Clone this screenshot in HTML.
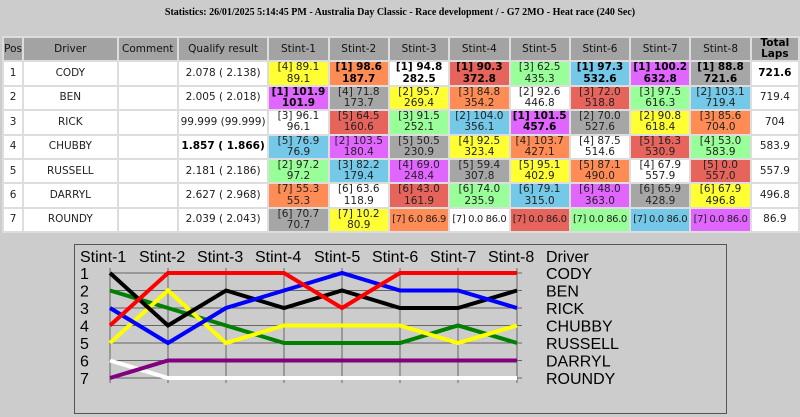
<!DOCTYPE html>
<html><head><meta charset="utf-8"><style>
body{margin:0;width:800px;height:417px;background:#cccccc;overflow:hidden;position:relative;font-family:"DejaVu Sans","Liberation Sans",sans-serif;}
.title{position:absolute;top:7px;left:0;width:800px;text-align:center;font:bold 10px "Liberation Serif",serif;color:#000;}
table{position:absolute;left:2px;top:36px;border-collapse:separate;border-spacing:2px;background:#dddddd;table-layout:fixed;width:798px;}
td,th{padding:0;text-align:center;font-size:10.5px;line-height:11.2px;color:#222;height:22.4px;overflow:hidden;white-space:nowrap;}
th{background:#a3a3a3;font-weight:normal;color:#111;height:22.4px;}
th.t{font-weight:bold;color:#000;}
td{background:#fff;}
td.s{font-size:10px;letter-spacing:-0.4px;}
.b{font-weight:bold;color:#000;}
.y{background:#ffff33}.o{background:#ff8c55}.r{background:#e6645c}.g{background:#99ff99}.c{background:#74c8e8}.p{background:#e066ff}.k{background:#a6a6a6}.w{background:#fff}
.chart{position:absolute;left:74px;top:244px;width:651px;height:168px;border:1px solid #555;}
</style></head><body>
<div class="title">Statistics: 26/01/2025 5:14:45 PM - Australia Day Classic - Race development / - G7 2MO - Heat race (240 Sec)</div>
<table>
<colgroup><col style="width:18px"><col style="width:92px"><col style="width:58px"><col style="width:88px"><col style="width:58px"><col style="width:58px"><col style="width:58px"><col style="width:58px"><col style="width:58px"><col style="width:58px"><col style="width:58px"><col style="width:58px"><col style="width:46px"></colgroup>
<tr><th>Pos</th><th>Driver</th><th>Comment</th><th>Qualify result</th><th>Stint-1</th><th>Stint-2</th><th>Stint-3</th><th>Stint-4</th><th>Stint-5</th><th>Stint-6</th><th>Stint-7</th><th>Stint-8</th><th class="t">Total<br>Laps</th></tr>
<tr><td>1</td><td>CODY</td><td></td><td>2.078 ( 2.138)</td><td class="y">[4] 89.1<br>89.1</td><td class="o b">[1] 98.6<br>187.7</td><td class="w b">[1] 94.8<br>282.5</td><td class="r b">[1] 90.3<br>372.8</td><td class="g">[3] 62.5<br>435.3</td><td class="c b">[1] 97.3<br>532.6</td><td class="p b">[1] 100.2<br>632.8</td><td class="k b">[1] 88.8<br>721.6</td><td class="b">721.6</td></tr>
<tr><td>2</td><td>BEN</td><td></td><td>2.005 ( 2.018)</td><td class="p b">[1] 101.9<br>101.9</td><td class="k">[4] 71.8<br>173.7</td><td class="y">[2] 95.7<br>269.4</td><td class="o">[3] 84.8<br>354.2</td><td class="w">[2] 92.6<br>446.8</td><td class="r">[3] 72.0<br>518.8</td><td class="g">[3] 97.5<br>616.3</td><td class="c">[2] 103.1<br>719.4</td><td>719.4</td></tr>
<tr><td>3</td><td>RICK</td><td></td><td>99.999 (99.999)</td><td class="w">[3] 96.1<br>96.1</td><td class="r">[5] 64.5<br>160.6</td><td class="g">[3] 91.5<br>252.1</td><td class="c">[2] 104.0<br>356.1</td><td class="p b">[1] 101.5<br>457.6</td><td class="k">[2] 70.0<br>527.6</td><td class="y">[2] 90.8<br>618.4</td><td class="o">[3] 85.6<br>704.0</td><td>704</td></tr>
<tr><td>4</td><td>CHUBBY</td><td></td><td class="b">1.857 ( 1.866)</td><td class="c">[5] 76.9<br>76.9</td><td class="p">[2] 103.5<br>180.4</td><td class="k">[5] 50.5<br>230.9</td><td class="y">[4] 92.5<br>323.4</td><td class="o">[4] 103.7<br>427.1</td><td class="w">[4] 87.5<br>514.6</td><td class="r">[5] 16.3<br>530.9</td><td class="g">[4] 53.0<br>583.9</td><td>583.9</td></tr>
<tr><td>5</td><td>RUSSELL</td><td></td><td>2.181 ( 2.186)</td><td class="g">[2] 97.2<br>97.2</td><td class="c">[3] 82.2<br>179.4</td><td class="p">[4] 69.0<br>248.4</td><td class="k">[5] 59.4<br>307.8</td><td class="y">[5] 95.1<br>402.9</td><td class="o">[5] 87.1<br>490.0</td><td class="w">[4] 67.9<br>557.9</td><td class="r">[5] 0.0<br>557.0</td><td>557.9</td></tr>
<tr><td>6</td><td>DARRYL</td><td></td><td>2.627 ( 2.968)</td><td class="o">[7] 55.3<br>55.3</td><td class="w">[6] 63.6<br>118.9</td><td class="r">[6] 43.0<br>161.9</td><td class="g">[6] 74.0<br>235.9</td><td class="c">[6] 79.1<br>315.0</td><td class="p">[6] 48.0<br>363.0</td><td class="k">[6] 65.9<br>428.9</td><td class="y">[6] 67.9<br>496.8</td><td>496.8</td></tr>
<tr><td>7</td><td>ROUNDY</td><td></td><td>2.039 ( 2.043)</td><td class="k">[6] 70.7<br>70.7</td><td class="y">[7] 10.2<br>80.9</td><td class="o s">[7] 6.0 86.9</td><td class="w s">[7] 0.0 86.0</td><td class="r s">[7] 0.0 86.0</td><td class="g s">[7] 0.0 86.0</td><td class="c s">[7] 0.0 86.0</td><td class="p s">[7] 0.0 86.0</td><td>86.9</td></tr>
</table>
<div class="chart"></div>
<svg style="position:absolute;left:0;top:0" width="800" height="417" font-family="Liberation Sans, sans-serif" font-size="16">
<g stroke="#666" stroke-width="1">
<line x1="110" y1="273" x2="517" y2="273"/><line x1="110" y1="290.5" x2="517" y2="290.5"/><line x1="110" y1="308" x2="517" y2="308"/><line x1="110" y1="325.5" x2="517" y2="325.5"/><line x1="110" y1="343" x2="517" y2="343"/><line x1="110" y1="360.5" x2="517" y2="360.5"/><line x1="110" y1="378" x2="517" y2="378"/>
<line x1="110" y1="268" x2="110" y2="383"/><line x1="168" y1="268" x2="168" y2="383"/><line x1="226" y1="268" x2="226" y2="383"/><line x1="284" y1="268" x2="284" y2="383"/><line x1="342" y1="268" x2="342" y2="383"/><line x1="400" y1="268" x2="400" y2="383"/><line x1="458" y1="268" x2="458" y2="383"/><line x1="517" y1="268" x2="517" y2="383"/>
<line x1="517" y1="273" x2="522" y2="273"/><line x1="517" y1="290.5" x2="522" y2="290.5"/><line x1="517" y1="308" x2="522" y2="308"/><line x1="517" y1="325.5" x2="522" y2="325.5"/><line x1="517" y1="343" x2="522" y2="343"/><line x1="517" y1="360.5" x2="522" y2="360.5"/><line x1="517" y1="378" x2="522" y2="378"/>
</g>
<g fill="none" stroke-width="4" stroke-linejoin="miter">
<polyline stroke="#fff" points="110,360.5 168,378 226,378 284,378 342,378 400,378 458,378 517,378"/>
<polyline stroke="#800080" points="110,378 168,360.5 226,360.5 284,360.5 342,360.5 400,360.5 458,360.5 517,360.5"/>
<polyline stroke="#008000" points="110,290.5 168,308 226,325.5 284,343 342,343 400,343 458,325.5 517,343"/>
<polyline stroke="#ffff00" points="110,343 168,290.5 226,343 284,325.5 342,325.5 400,325.5 458,343 517,325.5"/>
<polyline stroke="#000" points="110,273 168,325.5 226,290.5 284,308 342,290.5 400,308 458,308 517,290.5"/>
<polyline stroke="#0000ff" points="110,308 168,343 226,308 284,290.5 342,273 400,290.5 458,290.5 517,308"/>
<polyline stroke="#ff0000" points="110,325.5 168,273 226,273 284,273 342,308 400,273 458,273 517,273"/>
</g>
<g fill="#000">
<text x="80" y="262">Stint-1</text><text x="139" y="262">Stint-2</text><text x="197" y="262">Stint-3</text><text x="255" y="262">Stint-4</text><text x="314" y="262">Stint-5</text><text x="372" y="262">Stint-6</text><text x="430" y="262">Stint-7</text><text x="488" y="262">Stint-8</text><text x="546" y="262">Driver</text>
<text x="80" y="279">1</text><text x="80" y="296.5">2</text><text x="80" y="314">3</text><text x="80" y="331.5">4</text><text x="80" y="349">5</text><text x="80" y="366.5">6</text><text x="80" y="384">7</text>
<text x="546" y="279">CODY</text><text x="546" y="296.5">BEN</text><text x="546" y="314">RICK</text><text x="546" y="331.5">CHUBBY</text><text x="546" y="349">RUSSELL</text><text x="546" y="366.5">DARRYL</text><text x="546" y="384">ROUNDY</text>
</g>
</svg>
</body></html>
